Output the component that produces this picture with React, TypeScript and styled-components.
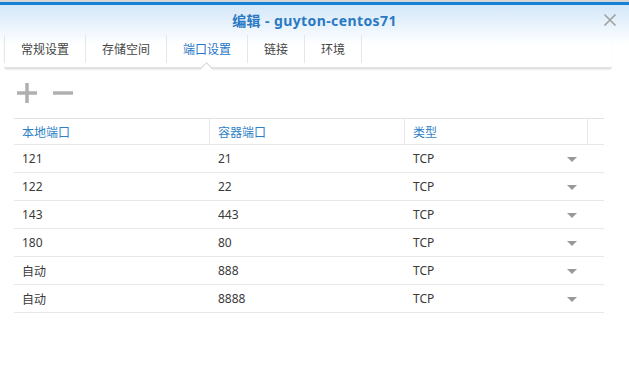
import styled, { createGlobalStyle } from "styled-components";

const GlobalStyle = createGlobalStyle`
  html, body {
    margin: 0;
    padding: 0;
    background: #ffffff;
  }
  body {
    font-family: "Noto Sans", "Noto Sans CJK SC", sans-serif;
  }
`;

const Window = styled.div`
  width: 629px;
  height: 375px;
  background: #ffffff;
  overflow: hidden;
`;

const Stripe = styled.div`
  height: 5px;
  background: linear-gradient(#d6d6d6 0 2px, #1582d8 2px 5px);
`;

const Header = styled.div`
  background: linear-gradient(#d3e7f9, #ffffff 40px);
`;

const TitleBar = styled.div`
  position: relative;
  height: 30px;
  display: flex;
  align-items: center;
  justify-content: center;
`;

const Title = styled.h1`
  margin: 0;
  font-size: 14px;
  font-weight: 700;
  color: #2a79c3;
  letter-spacing: 0.4px;
`;

const CloseButton = styled.button`
  position: absolute;
  right: 12px;
  top: 8px;
  width: 14px;
  height: 14px;
  padding: 0;
  border: none;
  background: none;
  display: flex;
`;

const TabBar = styled.div`
  position: relative;
  display: flex;
  align-items: flex-start;
  height: 32px;
  margin: 0 17px 0 4px;
  box-shadow: 0 2px 2px -1px rgba(0, 0, 0, 0.18);
  border-bottom: 1px solid #e4e4e4;
`;

const Tab = styled.div<{ $active?: boolean }>`
  position: relative;
  height: 28px;
  display: flex;
  align-items: center;
  padding: 0 16px;
  font-size: 12px;
  color: ${(p) => (p.$active ? "#1f76c8" : "#444")};
  border-left: 1px solid #e6e6e6;
  &:last-child {
    border-right: 1px solid #e6e6e6;
  }
  ${(p) =>
    p.$active &&
    `
    &::after {
      content: "";
      position: absolute;
      left: 50%;
      bottom: -10px;
      width: 8px;
      height: 8px;
      margin-left: -5px;
      background: #fff;
      border-left: 1px solid #d4d4d4;
      border-top: 1px solid #d4d4d4;
      transform: rotate(45deg);
    }
  `}
`;

const Toolbar = styled.div`
  display: flex;
  align-items: center;
  gap: 14px;
  height: 50px;
  padding: 0 16px;
`;

const ToolIcon = styled.button`
  width: 22px;
  height: 22px;
  padding: 0;
  border: none;
  background: none;
  display: flex;
`;

const Table = styled.div`
  margin: 0 25px 0 14px;
  font-size: 12px;
`;

const Row = styled.div<{ $head?: boolean }>`
  display: grid;
  grid-template-columns: 196px 195px 183px 16px;
  height: ${(p) => (p.$head ? 27 : 28)}px;
  border-top: ${(p) => (p.$head ? "1px solid #e3e3e3" : "none")};
  border-bottom: 1px solid #e8e8e8;
  box-sizing: border-box;
`;

const HeadCell = styled.div`
  display: flex;
  align-items: center;
  padding-left: 8px;
  color: #2f7fc7;
  border-right: 1px solid #e8e8e8;
  &:last-child {
    border-right: none;
  }
`;

const Cell = styled.div`
  display: flex;
  align-items: center;
  padding-left: 8px;
  color: #3a3a3a;
`;

const TypeCell = styled(Cell)`
  justify-content: space-between;
  padding-right: 11px;
`;

const Arrow = styled.span`
  width: 0;
  height: 0;
  border-left: 5px solid transparent;
  border-right: 5px solid transparent;
  border-top: 5px solid #999;
  margin-top: 2px;
`;

const tabs = ["常规设置", "存储空间", "端口设置", "链接", "环境"];

const ports = [
  { local: "121", container: "21" },
  { local: "122", container: "22" },
  { local: "143", container: "443" },
  { local: "180", container: "80" },
  { local: "自动", container: "888" },
  { local: "自动", container: "8888" },
];

export default function App() {
  return (
    <Window>
      <GlobalStyle />
      <Stripe />
      <Header>
        <TitleBar>
          <Title>编辑 - guyton-centos71</Title>
          <CloseButton>
            <svg width="14" height="14" viewBox="0 0 14 14">
              <path d="M1.5 1.5 L12.5 12.5 M12.5 1.5 L1.5 12.5" stroke="#a0a0a0" strokeWidth="1.6" />
            </svg>
          </CloseButton>
        </TitleBar>
        <TabBar>
          {tabs.map((t) => (
            <Tab key={t} $active={t === "端口设置"}>
              {t}
            </Tab>
          ))}
        </TabBar>
      </Header>
      <Toolbar>
        <ToolIcon>
          <svg width="22" height="22" viewBox="0 0 22 22">
            <path d="M11 1 V21 M1 11 H21" stroke="#b0b0b0" strokeWidth="3.5" />
          </svg>
        </ToolIcon>
        <ToolIcon>
          <svg width="22" height="22" viewBox="0 0 22 22">
            <path d="M1 11 H21" stroke="#b0b0b0" strokeWidth="3.5" />
          </svg>
        </ToolIcon>
      </Toolbar>
      <Table>
        <Row $head>
          <HeadCell>本地端口</HeadCell>
          <HeadCell>容器端口</HeadCell>
          <HeadCell>类型</HeadCell>
          <HeadCell />
        </Row>
        {ports.map((p, i) => (
          <Row key={i}>
            <Cell>{p.local}</Cell>
            <Cell>{p.container}</Cell>
            <TypeCell>
              TCP
              <Arrow />
            </TypeCell>
            <Cell />
          </Row>
        ))}
      </Table>
    </Window>
  );
}
